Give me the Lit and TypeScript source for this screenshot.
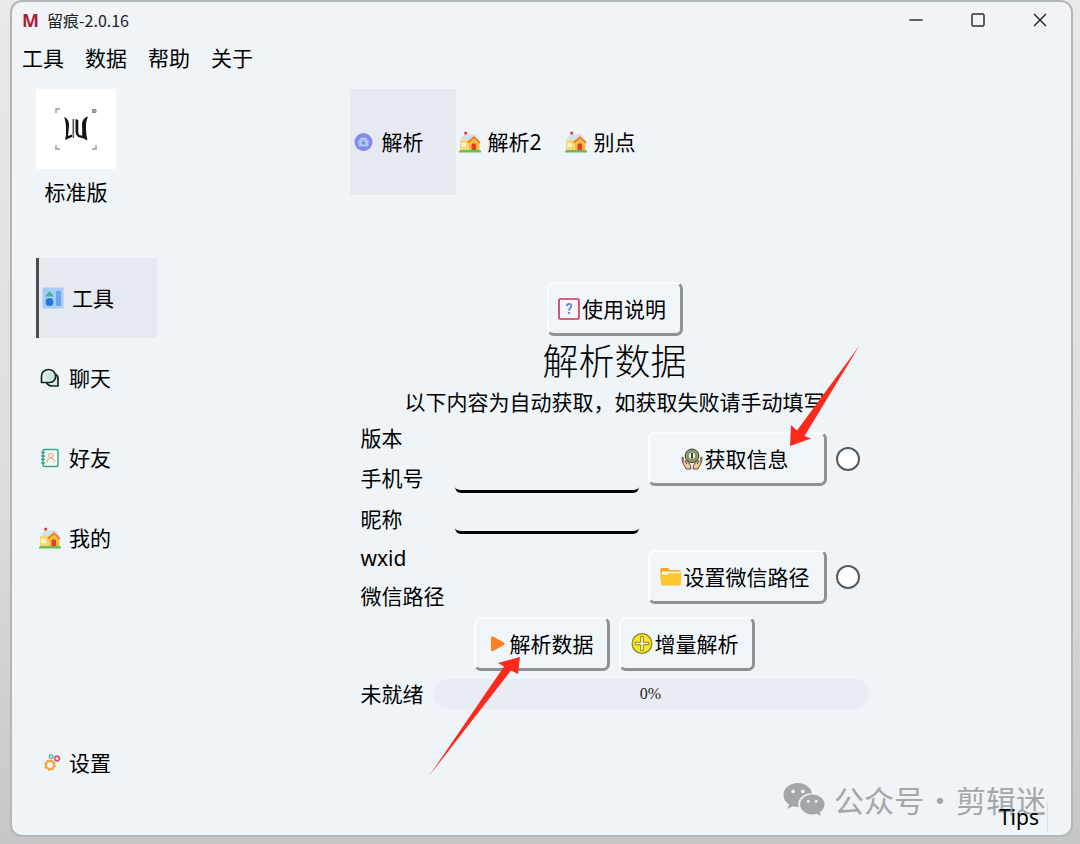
import { LitElement, html, css, svg } from "lit";
import { customElement, property, state } from "lit/decorators.js";
import { classMap } from "lit/directives/class-map.js";

const house = svg`
  <path d="M2.500 6.500 L6 3.500 L17 3.500 L20 8 L20 10 L2 10 Z" fill="#cfe3e6"/>
  <path d="M6.500 4 V2" stroke="#8a9aa5" stroke-width="0.600"/>
  <rect x="5.300" y="0.800" width="2.800" height="2.600" rx="0.500" fill="#e8403c"/>
  <rect x="1" y="9" width="11" height="11" fill="#fbd877"/>
  <path d="M10 11 L15 7 L20.500 11 V20 H10 Z" fill="#f7bd3c"/>
  <path d="M8.600 11.800 L15 6.200 L21 11.800" fill="none" stroke="#ee7b2e" stroke-width="1.800"/>
  <rect x="2.500" y="12" width="4.500" height="4" rx="0.500" fill="#fff6d2"/>
  <path d="M12.500 20 V14.500 a2.300 2.300 0 0 1 4.600 0 V20 Z" fill="#e0402b"/>
  <path d="M0 20.500 q0-1.600 2-1.600 h18 q2 0 2 1.600 z" fill="#6dbb52"/>
  <path d="M0 20 h22 v1.500 h-22z" fill="#6dbb52"/>`;

const gear = (x: number, y: number, r: number, c: string, w: number) => svg`
  <circle cx=${x} cy=${y} r=${r} fill="none" stroke=${c} stroke-width=${w}/>
  <circle cx=${x} cy=${y} r=${r + w * 0.6} fill="none" stroke=${c} stroke-width=${w * 0.7}
    stroke-dasharray="${((r + w * 0.6) * Math.PI) / 8} ${((r + w * 0.6) * Math.PI) / 8}"/>`;

const icons: Record<string, unknown> = {
  house,
  tools: svg`
    <rect x="0.500" y="0.500" width="21" height="21" fill="#a4cef5"/>
    <path d="M3 9.500 L7.500 4 L12 9.500 Z" fill="#45b29d"/>
    <circle cx="7.500" cy="15" r="3.900" fill="#1f78dc"/>
    <rect x="14" y="4" width="5" height="15" fill="#6ca4ee"/>`,
  chat: svg`
    <path d="M17 7.500 q2.500 2 2 6 v5.500 h-6 q-3.500 0-5.300-3" fill="#cfeee4" stroke="#1d2524" stroke-width="1.700" stroke-linejoin="round" stroke-linecap="round"/>
    <path d="M2.500 15.500 V9 a6.800 6.300 0 0 1 14 0 q0 6-6 6.500 Z" fill="#e6f2f3" stroke="#1d2524" stroke-width="1.700" stroke-linejoin="round"/>
    <circle cx="11" cy="9.500" r="4.500" fill="#c9e7df"/>`,
  contacts: svg`
    <rect x="4" y="2.500" width="15" height="17" rx="1.500" fill="#f2f6f6" stroke="#3ba58d" stroke-width="1.500"/>
    <path d="M2 5.500 h4 M2 9 h4 M2 12.500 h4 M2 16 h4" stroke="#3ba58d" stroke-width="1.300"/>
    <circle cx="11.800" cy="8.500" r="2.200" fill="none" stroke="#f0b184" stroke-width="1.200"/>
    <path d="M8.300 15.500 q0-4.500 3.500-4.500 t3.500 4.500" fill="none" stroke="#f0b184" stroke-width="1.200"/>`,
  gears: svg`
    ${gear(11, 13, 4, "#f7a12e", 2)}
    ${gear(12, 4.500, 1.700, "#57b6bd", 1.200)}
    ${gear(18, 6.500, 2.200, "#df4b62", 1.400)}`,
  lock: svg`
    <circle cx="10.500" cy="11" r="9" fill="#8289e8"/>
    <path d="M8 9 V7.500 h5 V9" fill="none" stroke="#b9d3fa" stroke-width="1.300"/>
    <rect x="5.500" y="8.500" width="10" height="7" rx="1" fill="#a9c8fa"/>
    <path d="M10.500 10.300 v3.400 M8.800 12 h3.400" stroke="#6d78de" stroke-width="1.200"/>`,
  help: svg`
    <rect x="1" y="1" width="20" height="20" rx="1" fill="#f4f6fb" stroke="#cf2f5b" stroke-width="1.600"/>
    <path d="M8.900 8.300 q0-2.400 2.200-2.400 t2.200 2.200 q0 1.300-1.200 2.200 t-1.100 2.300" fill="none" stroke="#5d83e6" stroke-width="1.700"/>
    <rect x="10.100" y="14" width="1.800" height="2" fill="#5d83e6"/>`,
  hands: svg`
    <circle cx="11" cy="7.800" r="6.800" fill="#8f9e69" stroke="#3b3a2c" stroke-width="1"/>
    <circle cx="11" cy="7.800" r="3.900" fill="#eceedd" stroke="#5b5f43" stroke-width="0.700"/>
    <path d="M11 5 v5.600" stroke="#2c2c24" stroke-width="1.800"/>
    <path d="M2 9 q-1.500 0-1 2.500 l1.500 5 3 4.500 h4.300 q0.600-4-2-6 l-2.600-2.300 q-1.200-0.200-0.900 1 l1.600 2.300" fill="#f2c79d" stroke="#4a392c" stroke-width="0.900" stroke-linejoin="round"/>
    <path d="M20 9 q1.500 0 1 2.500 l-1.500 5 -3 4.500 h-4.300 q-0.600-4 2-6 l2.600-2.300 q1.200-0.200 0.900 1 l-1.600 2.300" fill="#f2c79d" stroke="#4a392c" stroke-width="0.900" stroke-linejoin="round"/>
    <path d="M2.200 9 v4 M19.800 9 v4" stroke="#4a392c" stroke-width="0.800"/>`,
  folder: svg`
    <path d="M0.500 3 q0-1 1-1 h6.500 l2 2 h9.500 q1 0 1 1 v10 h-20z" fill="#f5a623"/>
    <path d="M1.800 5.500 h18 v5 h-18z" fill="#fff7e0"/>
    <path d="M0.500 9.500 q0-1 1-1 h6 l1.500-1.200 h11.500 q1 0 1 1 l-0.700 10.200 q-0.100 1-1.100 1 h-17.500 q-1 0-1-1z" fill="#fdc72f"/>`,
  play: svg`<path d="M5 4.500 q0-1.500 2-1 l11 6 q1.600 1.200 0 2.400 l-11 6 q-2 0.800-2-1z" fill="#ff7f1e"/>`,
  plus: svg`
    <circle cx="11" cy="10.500" r="9.900" fill="#f7ea1c" stroke="#8b7f2a" stroke-width="1.200"/>
    <path d="M9.700 3.500 h2.600 v5.700 h5.700 v2.600 h-5.700 v5.700 h-2.600 v-5.700 h-5.700 v-2.600 h5.700z" fill="#fffbd0" stroke="#8b7f2a" stroke-width="1"/>`,
};

@customElement("app-icon")
class AppIcon extends LitElement {
  @property() name = "house";
  static styles = css`
    :host { display: block; flex: none; width: 22px; height: 22px; }
    svg { display: block; width: 100%; height: 100%; }
  `;
  render() {
    return html`<svg viewBox="0 0 22 22" aria-hidden="true">${icons[this.name]}</svg>`;
  }
}

@customElement("app-root")
class AppRoot extends LitElement {
  @state() section = "工具";
  @state() tab = "解析";

  static styles = css`
    * { box-sizing: border-box; }
    :host {
      display: flex;
      position: relative;
      min-height: 100vh;
      padding: 0 7px 7px 10px;
      box-sizing: border-box;
      background: linear-gradient(#e9e9e9, #dcdcdc 60%, #c6c6c6);
      color: #000;
      font: 21px/30px "Noto Sans", "Noto Sans CJK SC", sans-serif;
    }
    button, input { font: inherit; color: inherit; margin: 0; }
    button { background: none; border: 0; padding: 0; white-space: nowrap; }
    .window {
      flex: 1;
      display: flex;
      flex-direction: column;
      min-width: 0;
      border: 2px solid #b3b7ba;
      border-radius: 12px;
      background: linear-gradient(#f2f3f9, #eef4f8 60px);
      overflow: hidden;
    }
    .titlebar { display: flex; align-items: center; height: 36px; padding-left: 10px; }
    .mark { width: 18px; font: 700 18px/24px "Open Sans", sans-serif; color: #a91f35; }
    .title { flex: 1; margin: 0; padding-left: 7px; font: 400 16px/24px "Noto Sans CJK SC", sans-serif; color: #222; }
    .control { display: flex; justify-content: center; width: 62px; }
    .control svg { width: 16px; height: 16px; fill: none; stroke: #2b2b35; stroke-width: 1.5; }
    .menu { display: flex; gap: 21px; padding: 5px 10px 7px; height: 42px; }
    .body { flex: 1; display: flex; padding: 9px 8px 0 24px; }
    .sidebar { flex: none; width: 130px; display: flex; flex-direction: column; padding-bottom: 32px; }
    .profile { width: 80px; text-align: center; margin-bottom: 51px; }
    .avatar { display: block; width: 80px; height: 80px; background: #fff; margin-bottom: 8px; }
    .nav { flex: 1; display: flex; flex-direction: column; }
    .item { display: flex; align-items: center; gap: 8px; width: 121px; height: 80px; padding-left: 3px; text-align: left; }
    .item.active { border-left: 3px solid #4b4b4f; background: #e6e9f0; }
    .item.last { margin-top: auto; }
    .main { flex: 1; display: flex; flex-direction: column; align-items: center; min-width: 0; }
    .column { width: 100%; max-width: 530px; }
    .tabs { display: flex; }
    .tab { display: flex; align-items: center; gap: 7px; width: 106px; height: 106px; padding-left: 3px; }
    .tab.active { background: #e6e9f0; }
    .panel { display: flex; flex-direction: column; align-items: center; padding: 87px 11px 0; }
    .push {
      display: flex;
      align-items: center;
      justify-content: center;
      gap: 2px;
      min-width: 136px;
      height: 54px;
      padding-right: 4px;
      border: solid;
      border-width: 2px 3px 3px 2px;
      border-color: #fafcfe #8e9296 #8e9296 #fafcfe;
      border-radius: 7px;
      background: #f0f5fa;
    }
    .heading { margin: 0; font: 300 36px/46px "Noto Sans CJK SC", sans-serif; }
    .hint { margin: 0; padding-top: 4px; line-height: 33px; white-space: nowrap; }
    .form {
      width: 100%;
      display: grid;
      grid-template-columns: 94px 184px 180px 1fr;
      grid-template-rows: 38px 42px 40px 38px 38px;
      align-items: center;
    }
    .label { grid-column: 1; white-space: nowrap; }
    .line {
      width: 184px;
      height: 30px;
      padding: 0 4px;
      border: 0 solid #000;
      border-bottom-width: 3px;
      border-radius: 6px;
      background: transparent;
      outline: none;
    }
    .side { grid-column: 3 / 5; display: flex; align-items: center; gap: 9px; padding-left: 9px; }
    .side.first { grid-row: 1 / 3; }
    .side.second { grid-row: 4 / 6; }
    .side .push { width: 179px; }
    .radio { appearance: none; width: 24px; height: 24px; border: 2px solid #57595c; border-radius: 50%; background: #fff; }
    .actions { display: flex; gap: 9px; margin: 2px 0 8px; }
    .status { width: 100%; display: flex; }
    .state { width: 72px; }
    .bar { flex: 1; border-radius: 15px; background: #e9ecf5; text-align: center; font: 16px/30px "Liberation Serif", serif; color: #222; }
    .footer { margin-top: auto; align-self: flex-end; display: flex; padding: 0 15px 3px 0; }
    .tips { position: relative; z-index: 1; padding-right: 8px; border-right: 1px solid #d9dfe6; }
    .watermark {
      position: absolute;
      right: 34px;
      bottom: 24px;
      display: flex;
      align-items: center;
      gap: 9px;
      color: #a3a7aa;
      font: 30px/42px "Noto Sans CJK SC", sans-serif;
      white-space: nowrap;
      pointer-events: none;
    }
    .watermark svg { width: 42px; height: 34px; }
    .words { display: flex; gap: 1px; }
    .arrow { position: absolute; pointer-events: none; fill: #fb2a1b; }
    .arrow.upper { left: 788px; top: 344px; width: 74px; height: 104px; }
    .arrow.lower { left: 427px; top: 654px; width: 96px; height: 124px; }
  `;

  private item(name: string, icon: string, last = false) {
    return html`<button class=${classMap({ item: true, last, active: this.section === name })}
      @click=${() => (this.section = name)}><app-icon name=${icon}></app-icon>${name}</button>`;
  }

  private tabButton(name: string, icon: string) {
    return html`<button role="tab" aria-selected=${this.tab === name ? "true" : "false"}
      class=${classMap({ tab: true, active: this.tab === name })}
      @click=${() => (this.tab = name)}><app-icon name=${icon}></app-icon>${name}</button>`;
  }

  render() {
    return html`
      <div class="window" lang="zh-CN">
        <header class="titlebar">
          <span class="mark" aria-hidden="true">M</span>
          <h1 class="title">留痕-2.0.16</h1>
          <button class="control" aria-label="最小化"><svg viewBox="0 0 16 16"><path d="M1.500 8 h13"/></svg></button>
          <button class="control" aria-label="最大化"><svg viewBox="0 0 16 16"><rect x="2" y="2" width="12" height="12" rx="1.500"/></svg></button>
          <button class="control" aria-label="关闭"><svg viewBox="0 0 16 16"><path d="M2 2 L14 14 M14 2 L2 14"/></svg></button>
        </header>
        <nav class="menu">
          ${["工具", "数据", "帮助", "关于"].map((m) => html`<button>${m}</button>`)}
        </nav>
        <div class="body">
          <aside class="sidebar">
            <div class="profile">
              <svg class="avatar" viewBox="0 0 80 80" aria-hidden="true">
                <path d="M20 24 v-4 h4 M20 56 v4 h4 M60 56 v4 h-4" fill="none" stroke="#999" stroke-width="1.400"/>
                <path d="M56.500 20.500 h3.500 v3 h-3.500z" fill="#aaa" stroke="#888"/>
                <path d="M28 28 q5.500 2 5 9 l-1 10 4-1.500 v2.500 l-7 3 q1.500-5 1-12 q-0.200-7-2-11z" fill="#151515"/>
                <path d="M36.500 30 h1.600 v19 h-1.600z" fill="#555"/>
                <path d="M39.500 30 l2.800 1 v12 q0 4 4 3.500 l-0.300-11 q0.300-6.500 6-8 q-2.500 5-2 12.500 q0 6 1.500 11.500 l-5-2.500 q-7-0.500-7-6.500z" fill="#151515"/>
              </svg>
              标准版
            </div>
            <nav class="nav">
              ${this.item("工具", "tools")}
              ${this.item("聊天", "chat")}
              ${this.item("好友", "contacts")}
              ${this.item("我的", "house")}
              ${this.item("设置", "gears", true)}
            </nav>
          </aside>
          <main class="main">
            <div class="column">
              <div class="tabs" role="tablist">
                ${this.tabButton("解析", "lock")}
                ${this.tabButton("解析2", "house")}
                ${this.tabButton("别点", "house")}
              </div>
              <section class="panel">
                <button class="push"><app-icon name="help"></app-icon>使用说明</button>
                <h2 class="heading">解析数据</h2>
                <p class="hint">以下内容为自动获取，如获取失败请手动填写</p>
                <div class="form">
                  <span class="label">版本</span>
                  <label class="label" for="phone">手机号</label>
                  <input class="line" id="phone" type="text" />
                  <label class="label" for="nick">昵称</label>
                  <input class="line" id="nick" type="text" />
                  <span class="label">wxid</span>
                  <span class="label">微信路径</span>
                  <div class="side first">
                    <button class="push"><app-icon name="hands"></app-icon>获取信息</button>
                    <input class="radio" type="radio" name="info" aria-label="获取信息" />
                  </div>
                  <div class="side second">
                    <button class="push"><app-icon name="folder"></app-icon>设置微信路径</button>
                    <input class="radio" type="radio" name="path" aria-label="设置微信路径" />
                  </div>
                </div>
                <div class="actions">
                  <button class="push"><app-icon name="play"></app-icon>解析数据</button>
                  <button class="push"><app-icon name="plus"></app-icon>增量解析</button>
                </div>
                <div class="status">
                  <span class="state">未就绪</span>
                  <div class="bar" role="progressbar" aria-valuenow="0" aria-label="未就绪">0%</div>
                </div>
              </section>
            </div>
            <footer class="footer"><span class="tips">Tips</span></footer>
          </main>
        </div>
      </div>
      <div class="watermark" lang="zh-CN">
        <svg viewBox="0 0 42 34" aria-hidden="true">
          <path fill="currentColor" fill-rule="evenodd" d="M15 1 C6.500 1 0.500 6.300 0.500 13 c0 4 2 7.200 5.400 9.400 L4.600 27 l5-2.700 q3 0.900 6.200 0.800 C13.500 17.500 20 11 29 11.200 C27.800 5.300 22 1 15 1z M10.200 7.400 a1.900 1.900 0 1 1 0 3.800 a1.900 1.900 0 0 1 0-3.800z M19.800 7.400 a1.900 1.900 0 1 1 0 3.800 a1.900 1.900 0 0 1 0-3.800z"/>
          <path fill="currentColor" fill-rule="evenodd" d="M29.300 12.500 c-6.800 0-12.200 4.500-12.200 10 s5.400 10 12.200 10 q2.400 0 4.500-0.700 l4 2.100 -1-3.500 c2.900-1.900 4.700-4.700 4.700-7.900 c0-5.500-5.400-10-12.200-10z M25.300 17.700 a1.500 1.500 0 1 1 0 3 a1.500 1.500 0 0 1 0-3z M33.200 17.700 a1.500 1.500 0 1 1 0 3 a1.500 1.500 0 0 1 0-3z"/>
        </svg>
        <span class="words"><span>公众号</span><span>·</span><span>剪辑迷</span></span>
      </div>
      <svg class="arrow upper" viewBox="0 0 74 104" aria-hidden="true"><path d="M71.500 1.500 L16.500 92 L23 94.500 L2 102 L3 81 L9 86.500 Z"/></svg>
      <svg class="arrow lower" viewBox="0 0 96 124" aria-hidden="true"><path d="M2 122 L77 12.500 L71 9 L93 3 L91 20 L84 16.500 Z"/></svg>
    `;
  }
}
